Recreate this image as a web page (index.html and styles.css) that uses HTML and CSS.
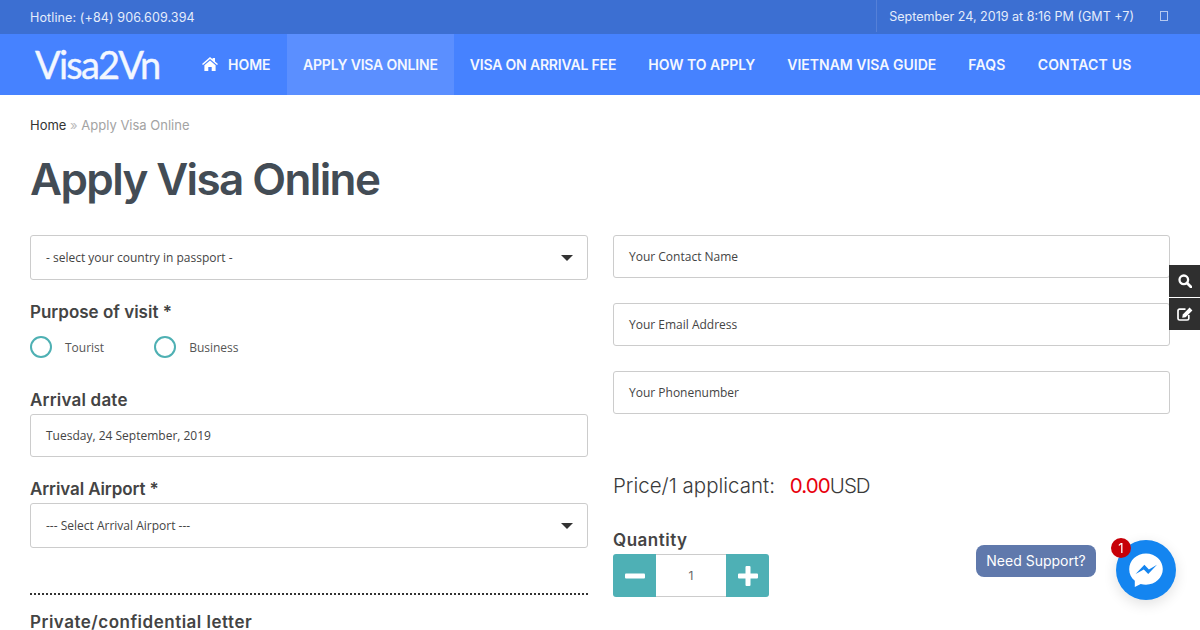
FILE: index.html
```html
<!DOCTYPE html>
<html lang="en">

<head>
     <meta charset="UTF-8">
     <title>Apply Visa Online</title>
     <link rel="stylesheet" href="styles.css">
</head>

<body>
     <div class="topbar">
          <div class="hotline">Hotline: (+84) 906.609.394</div>
          <div class="topbar-right">
               <div class="clock">September 24, 2019 at 8:16 PM (GMT +7)</div>
               <span class="missing-glyph"></span>
          </div>
     </div>

     <div class="nav">
          <a class="logo">Visa2Vn</a>
          <a class="nav-item nav-home">
               <svg class="home-icon" viewBox="0 0 16 14">
                    <path d="M8 0 L10.6 2.3 V1 H13 V4.4 L16 7 L15 8.1 L8 2.1 L1 8.1 L0 7 Z M8 3.4 L13.6 8.2 V14 H9.7 V10 H6.3 V14 H2.4 V8.2 Z" fill="#fff" />
               </svg>
               HOME
          </a>
          <a class="nav-item nav-tight active">APPLY VISA ONLINE</a>
          <a class="nav-item nav-tight">VISA ON ARRIVAL FEE</a>
          <a class="nav-item">HOW TO APPLY</a>
          <a class="nav-item">VIETNAM VISA GUIDE</a>
          <a class="nav-item nav-loose">FAQS</a>
          <a class="nav-item nav-loose">CONTACT US</a>
     </div>

     <div class="content">
          <div class="breadcrumb"><a>Home</a> <span class="sep">»</span> Apply Visa Online</div>
          <h1>Apply Visa Online</h1>

          <div class="columns">
               <div class="col">
                    <div class="field select">- select your country in passport -</div>
                    <div class="label label-purpose">Purpose of visit *</div>
                    <div class="radios">
                         <div class="radio"><span class="dot"></span>Tourist</div>
                         <div class="radio"><span class="dot"></span>Business</div>
                    </div>
                    <div class="label label-date">Arrival date</div>
                    <div class="field short">Tuesday, 24 September, 2019</div>
                    <div class="label label-airport">Arrival Airport *</div>
                    <div class="field select">--- Select Arrival Airport ---</div>
                    <div class="divider"></div>
                    <div class="label label-wide label-last">Private/confidential letter</div>
               </div>

               <div class="col">
                    <div class="field short stacked">Your Contact Name</div>
                    <div class="field short stacked">Your Email Address</div>
                    <div class="field short">Your Phonenumber</div>
                    <div class="price">Price/1 applicant: <span class="amount">0.00</span><span class="currency">USD</span></div>
                    <div class="label label-wide">Quantity</div>
                    <div class="qty">
                         <div class="qty-btn">
                              <svg viewBox="0 0 20 20" width="20" height="20">
                                   <rect x="0" y="7.5" width="20" height="5" rx="1" fill="#fff" />
                              </svg>
                         </div>
                         <div class="qty-value">1</div>
                         <div class="qty-btn">
                              <svg viewBox="0 0 20 20" width="20" height="20">
                                   <path d="M7.5 1 a1 1 0 0 1 1-1 h3 a1 1 0 0 1 1 1 v6.5 h6.5 a1 1 0 0 1 1 1 v3 a1 1 0 0 1-1 1 h-6.5 v6.5 a1 1 0 0 1-1 1 h-3 a1 1 0 0 1-1-1 v-6.5 h-6.5 a1 1 0 0 1-1-1 v-3 a1 1 0 0 1 1-1 h6.5 Z" fill="#fff" />
                              </svg>
                         </div>
                    </div>
               </div>
          </div>
     </div>

     <div class="side-tools">
          <div class="side-btn">
               <svg viewBox="0 0 14 14" width="14" height="14">
                    <circle cx="5.8" cy="5.8" r="4.3" fill="none" stroke="#fff" stroke-width="2.3" />
                    <path d="M9 9 L13 13" stroke="#fff" stroke-width="2.8" stroke-linecap="round" />
               </svg>
          </div>
          <div class="side-btn">
               <svg viewBox="0 0 16 14" width="16" height="14">
                    <path d="M8.5 2.2 H2.6 A1.6 1.6 0 0 0 1 3.8 V11.4 A1.6 1.6 0 0 0 2.6 13 H10.2 A1.6 1.6 0 0 0 11.8 11.4 V8" fill="none" stroke="#fff" stroke-width="1.7" />
                    <path d="M12.6 0.6 L15.4 3.4 L8.6 10.2 L5.2 10.8 L5.8 7.4 Z" fill="#fff" />
               </svg>
          </div>
     </div>

     <div class="support">Need Support?</div>
     <div class="messenger">
          <svg viewBox="0 0 36 36" width="36" height="36">
               <path d="M18 1.5 C8.6 1.5 1.2 8.4 1.2 17.2 C1.2 21.9 3.3 26 6.8 28.8 V35 L12.7 31.9 C14.4 32.4 16.1 32.7 18 32.7 C27.4 32.7 34.8 25.8 34.8 17.1 C34.8 8.4 27.4 1.5 18 1.5 Z" fill="#fff" />
               <path d="M7.6 22 L16.4 12.8 L20.9 17.4 L29 12.8 L20.2 22 L15.8 17.5 Z" fill="#1485f0" />
          </svg>
          <span class="badge">1</span>
     </div>
</body>
</html>
```

FILE: styles.css
```css
* {
     margin: 0;
     padding: 0;
     box-sizing: border-box;
}

html,
body {
     height: 630px;
     overflow: hidden;
}

body {
     font-family: Inter, "Open Sans", sans-serif;
     background: #fff;
     color: #3f3f3f;
}

.topbar {
     height: 34px;
     background: #3c6fd2;
     color: #e4ecfb;
     font-size: 12.55px;
     display: flex;
     justify-content: space-between;
     align-items: center;
     padding: 0 30px;
}

.hotline {
     letter-spacing: 0.1px;
}

.topbar-right {
     height: 32px;
     margin-top: -2px;
     display: flex;
     align-items: center;
     border-left: 1px solid #5580d8;
     padding-left: 12px;
}

.missing-glyph {
     width: 8px;
     height: 10px;
     border: 1px solid #b4c8f0;
     margin-left: 26px;
     margin-right: 2px;
}

.nav {
     height: 61px;
     background: #4682ff;
     display: flex;
     align-items: stretch;
}

.logo {
     width: 186px;
     padding-left: 35px;
     font-family: Lato, sans-serif;
     font-size: 38px;
     line-height: 61px;
     color: #f3f7ff;
     letter-spacing: -1.8px;
     -webkit-text-stroke: 0.4px #f3f7ff;
}

.nav-item {
     padding: 0 16px;
     font-size: 14px;
     font-weight: 600;
     color: #f4f7ff;
     display: flex;
     align-items: center;
     white-space: nowrap;
}

.nav-tight {
     letter-spacing: -0.18px;
}

.nav-loose {
     letter-spacing: 0.2px;
}

.nav-home {
     width: 101px;
}

.home-icon {
     width: 16px;
     height: 14px;
     margin-right: 10px;
     margin-top: -2px;
}

.nav-item.active {
     background: #5b8fff;
}

.content {
     padding: 0 30px;
}

.breadcrumb {
     margin-top: 21px;
     font-size: 13px;
     line-height: 18px;
     color: #a3a3a3;
}

.breadcrumb a {
     color: #333;
}

.sep {
     color: #bbb;
}

h1 {
     margin-top: 20px;
     height: 63px;
     font-size: 44px;
     line-height: 50px;
     font-weight: 600;
     letter-spacing: -1.6px;
     color: #434c55;
}

.columns {
     margin-top: 18px;
     display: grid;
     grid-template-columns: 558px 557px;
     gap: 25px;
}

.field {
     height: 43px;
     border: 1px solid #ccc;
     border-radius: 3px;
     padding: 0 15px;
     font-family: "Open Sans", sans-serif;
     font-size: 12px;
     color: #444;
     display: flex;
     align-items: center;
}

.field.stacked {
     margin-bottom: 25px;
}

.select {
     height: 45px;
     position: relative;
}

/* caret of the select */
.select:after {
     content: '';
     position: absolute;
     right: 14px;
     top: 19px;
     border-top: 6px solid #333;
     border-left: 6px solid transparent;
     border-right: 6px solid transparent;
     border-bottom: 0;
}

.label {
     font-size: 17px;
     font-weight: 600;
     line-height: 20px;
     color: #444;
}

.label-wide {
     letter-spacing: 0.5px;
}

/* last row above the fold */
.label-last {
     line-height: 16px;
}

.label-purpose {
     margin-top: 22px;
}

.radios {
     display: flex;
     gap: 50px;
     margin-top: 14px;
}

.radio {
     height: 22px;
     display: flex;
     align-items: center;
     font-family: "Open Sans", sans-serif;
     font-size: 12px;
     color: #555;
}

.dot {
     width: 22px;
     height: 22px;
     border: 2px solid #4eb0b3;
     border-radius: 50%;
     margin-right: 13px;
}

.label-date {
     margin-top: 32px;
     margin-bottom: 4px;
     letter-spacing: 0.2px;
}

.label-airport {
     margin-top: 22px;
     margin-bottom: 4px;
     letter-spacing: -0.1px;
}

.divider {
     margin-top: 45px;
     border-top: 2px dotted #333;
     margin-bottom: 19px;
}

.price {
     margin-top: 57px;
     height: 29px;
     font-size: 20.5px;
     font-weight: 300;
     line-height: 29px;
     color: #3a3a3a;
     margin-bottom: 30px;
}

.amount {
     color: #e8000d;
     font-weight: 400;
     margin-left: 9px;
     letter-spacing: -0.9px;
}

.currency {
     letter-spacing: -1px;
}

.qty {
     margin-top: 4px;
     display: flex;
     width: 156px;
     height: 43px;
}

.qty-btn {
     width: 43px;
     background: #4eb0b5;
     display: flex;
     align-items: center;
     justify-content: center;
     border-radius: 3px 0 0 3px;
}

.qty-btn:last-child {
     border-radius: 0 3px 3px 0;
}

.qty-value {
     width: 70px;
     border-top: 1px solid #ccc;
     border-bottom: 1px solid #ccc;
     font-size: 12px;
     color: #666;
     display: flex;
     align-items: center;
     justify-content: center;
}

.side-tools {
     position: fixed;
     right: 0;
     top: 265px;
     width: 31px;
     display: flex;
     flex-direction: column;
     gap: 1px;
}

.side-btn {
     height: 32px;
     background: #2f2f2f;
     display: flex;
     align-items: center;
     justify-content: center;
}

.support {
     position: fixed;
     left: 976px;
     top: 545px;
     width: 120px;
     height: 32px;
     background: #6079ac;
     border-radius: 8px;
     color: #fff;
     font-size: 14px;
     line-height: 31px;
     text-align: center;
}

.messenger {
     position: fixed;
     left: 1116px;
     top: 540px;
     width: 60px;
     height: 60px;
     border-radius: 50%;
     background: #1485f0;
     box-shadow: 0 4px 14px rgba(0, 0, 0, 0.12);
     display: flex;
     align-items: center;
     justify-content: center;
}

.badge {
     position: absolute;
     left: -5px;
     top: -2px;
     width: 20px;
     height: 20px;
     border-radius: 50%;
     background: #c70008;
     color: #fff;
     font-size: 13px;
     line-height: 20px;
     text-align: center;
}
```
